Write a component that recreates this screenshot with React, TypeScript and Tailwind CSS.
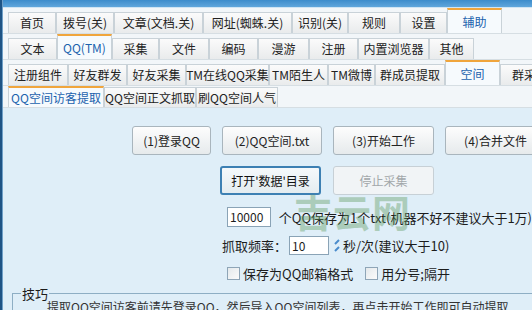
import React from "react";

type TabDef = { label: string; w: string; selected?: boolean };

const row1: TabDef[] = [
  { label: "首页", w: "w-[48px]" },
  { label: "拨号(关)", w: "w-[58px]" },
  { label: "文章(文档.关)", w: "w-[89px]" },
  { label: "网址(蜘蛛.关)", w: "w-[89px]" },
  { label: "识别(关)", w: "w-[56px]" },
  { label: "规则", w: "w-[52px]" },
  { label: "设置", w: "w-[47px]" },
  { label: "辅助", w: "w-[55px]", selected: true },
];

const row2: TabDef[] = [
  { label: "文本", w: "w-[49px]" },
  { label: "QQ(TM)", w: "w-[55px]", selected: true },
  { label: "采集", w: "w-[47px]" },
  { label: "文件", w: "w-[50px]" },
  { label: "编码", w: "w-[49px]" },
  { label: "漫游", w: "w-[51px]" },
  { label: "注册", w: "w-[49px]" },
  { label: "内置浏览器", w: "w-[71px]" },
  { label: "其他", w: "w-[45px]" },
];

const row3: TabDef[] = [
  { label: "注册组件", w: "w-[60px]" },
  { label: "好友群发", w: "w-[59px]" },
  { label: "好友采集", w: "w-[59px]" },
  { label: "TM在线QQ采集", w: "w-[83px]" },
  { label: "TM陌生人", w: "w-[59px]" },
  { label: "TM微博", w: "w-[47px]" },
  { label: "群成员提取", w: "w-[70px]" },
  { label: "空间", w: "w-[55px]", selected: true },
  { label: "群采集", w: "w-[60px]" },
];

const row4: TabDef[] = [
  { label: "QQ空间访客提取", w: "w-[96px]", selected: true },
  { label: "QQ空间正文抓取", w: "w-[92px]" },
  { label: "刷QQ空间人气", w: "w-[82px]" },
];

function Tab({ tab, h }: { tab: TabDef; h: string }) {
  if (tab.selected) {
    return (
      <div
        className={`${tab.w} h-full shrink-0 flex items-center justify-center whitespace-nowrap border-x border-b-0 border-t-2 border-x-[#c9d2d8] border-t-[#f0a53c] bg-[#f6fafd] text-[#1b62ad]`}
      >
        {tab.label}
      </div>
    );
  }
  return (
    <div
      className={`${tab.w} ${h} shrink-0 flex items-center justify-center whitespace-nowrap border border-b-0 border-[#c9d2d8] bg-gradient-to-b from-[#fbfbfb] to-[#e9ebec] text-[#222]`}
    >
      {tab.label}
    </div>
  );
}

function TabRow({ tabs, rowH, tabH }: { tabs: TabDef[]; rowH: string; tabH: string }) {
  return (
    <div className={`${rowH} shrink-0 flex items-end pl-[5px] border-b border-[#d6dee3] bg-[#f2f6f9]`}>
      {tabs.map((t) => (
        <Tab key={t.label} tab={t} h={tabH} />
      ))}
    </div>
  );
}

function Btn({
  children,
  w,
  focused,
  disabled,
}: {
  children: React.ReactNode;
  w: string;
  focused?: boolean;
  disabled?: boolean;
}) {
  let cls = "border-[#a9b5bd] bg-gradient-to-b from-[#fdfdfd] to-[#e6eaec] text-[#222]";
  if (focused) cls = "border-2 border-[#3d80b3] bg-gradient-to-b from-[#f5f9fb] to-[#e4ecf0] text-[#111]";
  if (disabled) cls = "border-[#c7d0d6] bg-[#f1f4f6] text-[#a2a7aa]";
  return (
    <div
      className={`${w} h-[29px] shrink-0 flex items-center justify-center whitespace-nowrap rounded-[3px] border ${cls}`}
    >
      {children}
    </div>
  );
}

function Check({ label }: { label: string }) {
  return (
    <div className="flex items-center gap-[3px]">
      <span className="w-[13px] h-[13px] border border-[#8ea5b7] bg-gradient-to-br from-[#e4e9ec] to-[#fbfbfb]" />
      <span className="text-[13px]">{label}</span>
    </div>
  );
}

export default function App() {
  return (
    <div
      className="relative w-[532px] h-[310px] overflow-hidden flex bg-[#dfeef8] text-[12px] leading-none"
      style={{ fontFamily: '"SimSun", "Noto Sans CJK SC", sans-serif' }}
    >
      <div className="w-[3px] shrink-0 bg-[#1f5485] border-r border-[#6fa0c8]" />
      <div className="flex-1 flex flex-col min-w-0">
        <div className="h-[8px] shrink-0 bg-gradient-to-b from-[#3c8ccb] to-[#5fa6dc] border-b border-[#cfe4f3]" />
        <TabRow tabs={row1} rowH="h-[26px]" tabH="h-[21px]" />
        <TabRow tabs={row2} rowH="h-[26px]" tabH="h-[21px]" />
        <TabRow tabs={row3} rowH="h-[26px]" tabH="h-[21px]" />
        <TabRow tabs={row4} rowH="h-[22px]" tabH="h-[20px]" />

        <div className="shrink-0 flex flex-col text-[#1c1c1c]">
          <div className="mt-[18px] pl-[129px] flex gap-[11px]">
            <Btn w="w-[79px]">(1)登录QQ</Btn>
            <Btn w="w-[100px]">(2)QQ空间.txt</Btn>
            <Btn w="w-[101px]">(3)开始工作</Btn>
            <Btn w="w-[101px]">(4)合并文件</Btn>
          </div>
          <div className="mt-[11px] pl-[217px] flex gap-[12px]">
            <Btn w="w-[101px]" focused>
              打开'数据'目录
            </Btn>
            <Btn w="w-[101px]" disabled>
              停止采集
            </Btn>
          </div>
          <div className="mt-[12px] pl-[224px] flex items-center gap-[8px]">
            <div className="w-[55px] h-[20px] border border-[#8aa3b6] bg-white flex items-center pl-[2px]">
              10000
            </div>
            <span className="text-[13px] whitespace-nowrap">个QQ保存为1个txt(机器不好不建议大于1万)</span>
          </div>
          <div className="mt-[9px] pl-[219px] flex items-center">
            <span className="text-[13px]">抓取频率：</span>
            <div className="ml-[2px] w-[40px] h-[19px] border border-[#8aa3b6] bg-white flex items-center pl-[2px]">
              10
            </div>
            <svg width="10" height="16" viewBox="0 0 10 16" className="ml-[3px]">
              <path d="M7 2 L3 6 M7 9 L3 13" stroke="#4a8ccc" strokeWidth="2" fill="none" />
            </svg>
            <span className="ml-[1px] text-[13px]">秒/次(建议大于10)</span>
          </div>
          <div className="mt-[12px] pl-[224px] flex items-center gap-[12px]">
            <Check label="保存为QQ邮箱格式" />
            <Check label="用分号;隔开" />
          </div>
          <fieldset className="mt-[7px] ml-[9px] w-[560px] h-[40px] border border-[#8eaec4] px-[8px]">
            <legend className="px-[1px] text-[13px]">技巧</legend>
            <div className="pl-[26px] pt-[1px] text-[#333] whitespace-nowrap">
              提取QQ空间访客前请先登录QQ，然后导入QQ空间列表，再点击开始工作即可自动提取
            </div>
          </fieldset>
        </div>
      </div>
      <div className="absolute left-[294px] top-[192px] text-[38px] font-bold tracking-[1px] text-[#5f9a5f] opacity-40 pointer-events-none">
        吉云网
      </div>
    </div>
  );
}
